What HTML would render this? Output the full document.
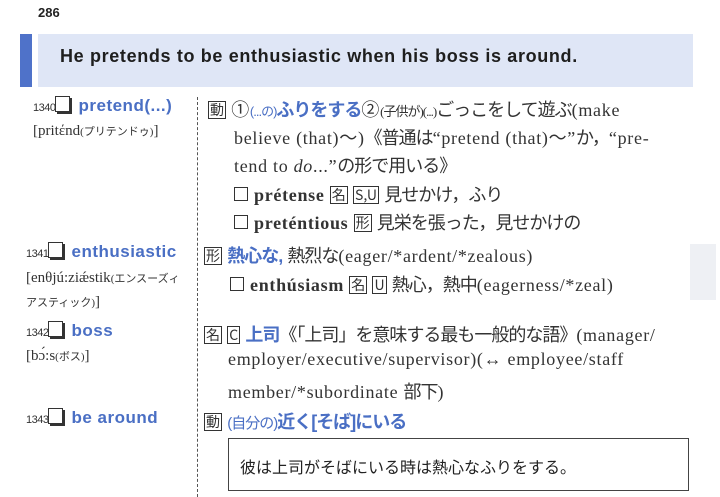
<!DOCTYPE html>
<html><head><meta charset="utf-8"><style>
body{margin:0;width:720px;height:497px;background:#fff;position:relative;overflow:hidden;font-family:"Liberation Serif","Noto Serif CJK SC",serif;color:#333;}
.a{position:absolute;white-space:nowrap;}
.s{font-family:"Liberation Sans","Noto Sans CJK JP",sans-serif;}
.j{font-family:"Liberation Serif","Noto Sans CJK JP",serif;}
.b{color:#4a6fc4;font-weight:bold;font-family:"Liberation Sans","Noto Sans CJK JP",sans-serif;}
.bl{color:#4a6fc4;font-family:"Liberation Sans","Noto Sans CJK JP",sans-serif;}
.num{font-size:11px;font-family:"Liberation Sans",sans-serif;letter-spacing:-0.5px;}
.cb{display:inline-block;width:13px;height:14px;border:1.5px solid #333;box-shadow:2px 2px 0 #333;vertical-align:-1px;margin-right:8px;}
.bx{display:inline-block;border:1.2px solid #333;font-size:14px;line-height:16px;padding:0 1px;font-family:"Noto Sans CJK JP",sans-serif;vertical-align:1px;letter-spacing:0;}
.sq{display:inline-block;width:12px;height:12px;border:1.5px solid #333;margin-right:6px;vertical-align:0;}
.t{font-size:18px;letter-spacing:0.7px;}
.k{letter-spacing:-1px;}
.lw{font-size:17px;letter-spacing:0.5px;}
</style></head><body>
<div class="a s" style="left:38px;top:5px;font-size:13px;font-weight:bold;color:#222">286</div>
<div class="a" style="left:20px;top:34px;width:12px;height:53px;background:#4f72c9"></div>
<div class="a" style="left:38px;top:34px;width:655px;height:53px;background:#dfe6f6"></div>
<div class="a s" style="left:60px;top:46px;font-size:18px;font-weight:bold;color:#1e1e1e;letter-spacing:0.65px">He pretends to be enthusiastic when his boss is around.</div>
<div class="a" style="left:197px;top:97px;height:400px;border-left:1px dashed #555"></div>
<div class="a" style="left:690px;top:244px;width:26px;height:56px;background:#eef0f4"></div>

<div class="a" style="left:33px;top:96px"><span class="num">1340</span><span class="cb"></span><span class="b lw">pretend(...)</span></div>
<div class="a j" style="left:33px;top:123px;font-size:15px">[pritέnd<span style="font-size:11px">(プリテンドゥ)</span>]</div>

<div class="a j t" style="left:208px;top:96px"><span class="bx">動</span> ①<span class="bl k" style="font-size:13px">(...の)</span><span class="b k">ふりをする</span>②<span class="k" style="font-size:13px">(子供が)(...)</span><span class="k">ごっこをして遊ぶ</span>(make</div>
<div class="a j t" style="left:234px;top:124px">believe (that)～)<span class="k">《普通は</span>“pretend (that)～”<span class="k">か，</span>“pre-</div>
<div class="a j t" style="left:234px;top:152px">tend to <i>do</i>...”<span class="k">の形で用いる》</span></div>
<div class="a j t" style="left:234px;top:181px"><span class="sq"></span><b>prétense</b> <span class="bx">名</span> <span class="bx">S,U</span> <span class="k">見せかけ，ふり</span></div>
<div class="a j t" style="left:234px;top:209px"><span class="sq"></span><b>preténtious</b> <span class="bx">形</span> <span class="k">見栄を張った，見せかけの</span></div>

<div class="a" style="left:26px;top:242px"><span class="num">1341</span><span class="cb"></span><span class="b lw">enthusiastic</span></div>
<div class="a j" style="left:26px;top:270px;font-size:15px">[enθjú:ziǽstik<span style="font-size:11px">(エンスーズィ</span></div>
<div class="a j" style="left:26px;top:294px;font-size:11px">アスティック)<span style="font-size:15px">]</span></div>
<div class="a j t" style="left:204px;top:242px"><span class="bx">形</span> <span class="b k">熱心な,</span> <span class="k">熱烈な</span>(eager/*ardent/*zealous)</div>
<div class="a j t" style="left:230px;top:271px"><span class="sq"></span><b>enthúsiasm</b> <span class="bx">名</span> <span class="bx">U</span> <span class="k">熱心，熱中</span>(eagerness/*zeal)</div>

<div class="a" style="left:26px;top:321px"><span class="num">1342</span><span class="cb"></span><span class="b lw">boss</span></div>
<div class="a j" style="left:26px;top:348px;font-size:15px">[bɔ́:s<span style="font-size:11px">(ボス)</span>]</div>
<div class="a j t" style="left:204px;top:321px"><span class="bx">名</span> <span class="bx">C</span> <span class="b k">上司</span><span class="k">《「上司」を意味する最も一般的な語》</span>(manager/</div>
<div class="a j t" style="left:228px;top:349px">employer/executive/supervisor)(↔ employee/staff</div>
<div class="a j t" style="left:228px;top:378px">member/*subordinate <span class="k">部下</span>)</div>

<div class="a" style="left:26px;top:408px"><span class="num">1343</span><span class="cb"></span><span class="b lw">be around</span></div>
<div class="a j t" style="left:204px;top:408px"><span class="bx">動</span> <span class="bl k" style="font-size:15px">(自分の)</span><span class="b k">近く[そば]にいる</span></div>
<div class="a" style="left:228px;top:438px;width:459px;height:51px;border:1px solid #444"></div>
<div class="a s" style="left:240px;top:454px;font-size:16px;color:#222">彼は上司がそばにいる時は熱心なふりをする。</div>
</body></html>
